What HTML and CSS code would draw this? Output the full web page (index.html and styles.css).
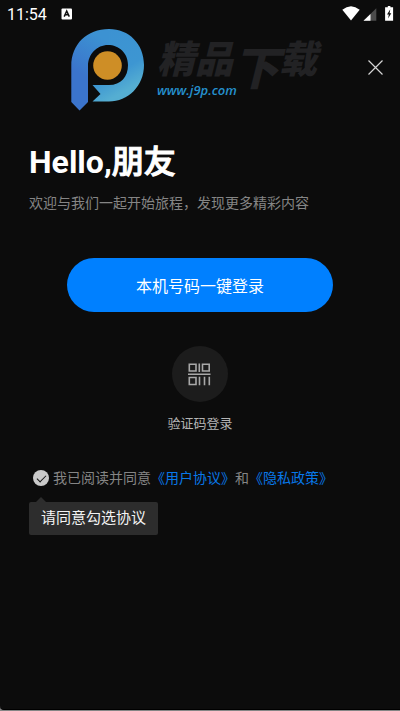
FILE: index.html
```html
<!DOCTYPE html>
<html lang="zh-CN">
<head>
<meta charset="utf-8">
<meta name="viewport" content="width=device-width, initial-scale=1">
<title>登录</title>
<link rel="stylesheet" href="styles.css">
</head>
<body>
<div class="screen">
  <div class="status">
    <span class="time">11:54</span>
    <svg class="badge" width="12" height="12" viewBox="0 0 12 12" aria-hidden="true"><rect x="0.5" y="0.5" width="10.5" height="11" rx="1" fill="#fff"/><path d="M3.2 8.6 5.7 3l2.6 5.6M4 6.8h3.4" fill="none" stroke="#111" stroke-width="1.5"/></svg>
    <svg class="system" width="52" height="18" viewBox="0 0 52 18" aria-hidden="true">
      <path d="M0.3 4.8Q9 -2.3 17.7 4.8L9 15.5Z" fill="#fff"/>
      <path d="M34.300 3.2V15.7H21.500Z" fill="#4b4b4b"/><path d="M28.500 9V15.7H21.500Z" fill="#fff"/>
      <path d="M45.800 1h2.6v1.3h2.700V15.7h-8V2.3h2.7Z" fill="#fff"/><path d="M48.300 4.3 45 9.6h1.8l-.7 4 3.2-5.4h-1.7Z" fill="#111"/>
    </svg>
  </div>

  <header class="header">
    <div class="brand">
      <svg class="logo" width="74" height="82" viewBox="0 0 74 82" aria-hidden="true">
        <defs>
          <linearGradient id="ring" x1="0.3" y1="0" x2="0.7" y2="1"><stop offset="0" stop-color="#3c92d2"/><stop offset="0.58" stop-color="#3d96d2"/><stop offset="0.85" stop-color="#55aed2"/></linearGradient>
          <linearGradient id="stem" gradientUnits="userSpaceOnUse" x1="30" y1="8" x2="8" y2="44"><stop offset="0" stop-color="#3c92d2"/><stop offset="1" stop-color="#3b74cc"/></linearGradient>
        </defs>
        <path d="M37 0H38C58 0 73 15 73 36S57 72.500 38 72.500H21.500L29.500 65 21.500 56H38C50 56 57 48 57 36S48 16 37 16Z" fill="url(#ring)"/>
        <path d="M.3 37C.3 15 16 0 38 0V16H37C26 16 17 25 17 37V73L8.500 81.500.3 73Z" fill="url(#stem)"/>
        <circle cx="36.500" cy="36.500" r="14.300" fill="#ce8e26"/>
      </svg>
      <div class="wordmark">
        <div class="name">精品<span class="drop">下</span>载</div>
        <div class="site">www.j9p.com</div>
      </div>
    </div>
    <button class="close" type="button" aria-label="关闭"><svg width="15" height="15" viewBox="0 0 15 15" aria-hidden="true"><path d="M.5.5 14.500 14.500M14.500.5.5 14.500" stroke="#d5d5d5" stroke-width="1.200"/></svg></button>
  </header>

  <main class="main">
    <h1 class="title">Hello,<span class="friend">朋友</span></h1>
    <p class="subtitle">欢迎与我们一起开始旅程，发现更多精彩内容</p>
    <button class="login" type="button">本机号码一键登录</button>
    <button class="code" type="button">
      <span class="disc"><svg width="23" height="23" viewBox="0 0 23 23" aria-hidden="true"><g fill="none" stroke="#a8a8a8" stroke-width="1.600"><path d="M1.300 1.300H8V8H1.300ZM14.500 1.300H21.200V8H14.500ZM1.300 14.500H8V21.500H1.300ZM11.300.5V9M0 11.300H22.500M11.500 13.700V22.300M16.500 13.700V22.300M21.300 13.700V22.300"/></g></svg></span>
      <span>验证码登录</span>
    </button>
    <div class="agree">
      <input class="tick" type="checkbox" id="agree" checked>
      <label for="agree">我已阅读并同意</label><a href="#terms">《用户协议》</a><span>和</span><a href="#privacy">《隐私政策》</a>
    </div>
    <div class="hint">请同意勾选协议</div>
  </main>
</div>
</body>
</html>
```
FILE: styles.css
```css
* { box-sizing: border-box; }
body {
  margin: 0;
  background: #858585;
  color: #fff;
  font-family: Roboto, "Noto Sans CJK SC", sans-serif;
}
button {
  padding: 0;
  border: 0;
  background: none;
  color: inherit;
  font: inherit;
  cursor: pointer;
}
svg { display: block; }
.screen {
  min-height: calc(100vh - 1px);
  background: #0c0c0c;
  border-bottom: 1px solid #000;
  border-bottom-left-radius: 4px;
}
.status {
  display: flex;
  align-items: center;
  height: 28px;
  padding: 0 6px 0 7px;
}
.time { font-size: 16px; }
.badge { margin-left: 14px; }
.system { margin-left: auto; }
.header {
  display: flex;
  align-items: center;
  justify-content: space-between;
  height: 84px;
  padding: 0 17px 0 71px;
}
.brand { display: flex; gap: 12px; }
.wordmark { padding-top: 8px; }
.name {
  height: 44px;
  color: #222224;
  font-size: 38px;
  font-style: italic;
  font-weight: 900;
  line-height: 46px;
  white-space: nowrap;
}
.drop { font-size: 46px; vertical-align: -12px; line-height: 1; }
.site {
  color: #2590cc;
  font-family: "Open Sans", sans-serif;
  font-size: 13px;
  font-style: italic;
  font-weight: 600;
  line-height: 18px;
}
.close { margin-bottom: 6px; }
.main {
  display: flex;
  flex-direction: column;
  align-items: flex-start;
  padding: 30px 29px;
}
.title {
  margin: 0;
  font-size: 32px;
  font-weight: 700;
  line-height: 40px;
}
.friend {
  font-weight: 500;
  -webkit-text-stroke: 1px currentColor;
}
.subtitle {
  margin: 11px 0 0;
  color: #858585;
  font-size: 14px;
  line-height: 20px;
}
.login {
  align-self: stretch;
  height: 54px;
  margin: 45px 38px 0;
  border-radius: 27px;
  background: #0080ff;
  font-size: 16px;
}
.code {
  display: flex;
  flex-direction: column;
  align-items: center;
  align-self: center;
  gap: 12px;
  margin-top: 34px;
  color: #b4b4b4;
  font-size: 13px;
  line-height: 20px;
}
.disc {
  display: grid;
  place-items: center;
  width: 56px;
  height: 56px;
  border-radius: 50%;
  background: #1c1c1c;
}
.agree {
  display: flex;
  align-items: center;
  margin-top: 34px;
  padding-left: 4px;
  color: #858585;
  font-size: 14px;
  line-height: 20px;
}
.agree a { color: #0878e8; text-decoration: none; }
.tick {
  display: grid;
  place-items: center;
  width: 16px;
  height: 16px;
  margin: 0 4px 0 0;
  border-radius: 50%;
  background: #555;
  appearance: none;
}
.tick:checked { background: #cacaca; }
.tick:checked::before {
  content: "";
  width: 8px;
  height: 4px;
  margin-bottom: 2px;
  border: solid #151515;
  border-width: 0 0 1px 1px;
  rotate: -45deg;
}
.hint {
  position: relative;
  margin-top: 14px;
  padding: 5px 12px 6px;
  border-radius: 2px;
  background: #2d2d2d;
  color: #f3f3f3;
  font-size: 15px;
  line-height: 22px;
}
.hint::before {
  content: "";
  position: absolute;
  left: 7px;
  bottom: 100%;
  border: 5px solid transparent;
  border-top: 0;
  border-bottom-color: #2d2d2d;
}
```
